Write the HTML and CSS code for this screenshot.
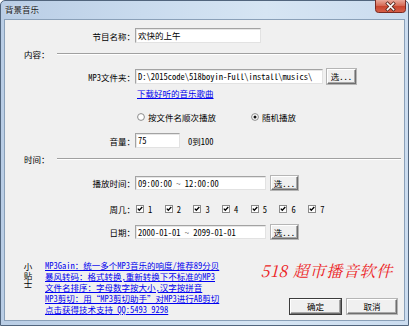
FILE: index.html
```html
<!DOCTYPE html>
<html lang="zh-CN">
<head>
<meta charset="utf-8">
<title>背景音乐</title>
<link rel="stylesheet" href="styles.css">
</head>
<body>
<div class="window">
  <div class="titlebar">
    <span class="title">背景音乐</span>
    <div class="close">
      <svg width="31" height="13" viewBox="0 0 31 13">
        <defs>
          <linearGradient id="cg" x1="0" y1="0" x2="0" y2="1">
            <stop offset="0" stop-color="#e9a99b"/>
            <stop offset="0.45" stop-color="#d66a55"/>
            <stop offset="0.5" stop-color="#c8452e"/>
            <stop offset="1" stop-color="#d7604a"/>
          </linearGradient>
        </defs>
        <path d="M0.5 0 V9.5 Q0.5 12.5 3.5 12.5 H27.5 Q30.5 12.5 30.5 9.5 V0" fill="url(#cg)" stroke="#7a2a22"/>
        <path d="M12.5 3.5 L18.5 9.5 M18.5 3.5 L12.5 9.5" stroke="#5a2a22" stroke-width="3.2" stroke-linecap="square"/>
        <path d="M12.5 3.5 L18.5 9.5 M18.5 3.5 L12.5 9.5" stroke="#ffffff" stroke-width="1.6" stroke-linecap="square"/>
      </svg>
    </div>
  </div>
  <div class="client">
    <div class="row r-name">
      <span class="lbl">节目名称：</span>
      <div class="edit w-name">欢快的上午</div>
    </div>

    <div class="group g-content">
      <span class="glbl">内容：</span>
      <span class="gline"></span>
    </div>

    <div class="row r-mp3">
      <span class="lbl">MP3文件夹：</span>
      <div class="edit w-path">D:\2015code\518boyin-Full\install\musics\</div>
      <button class="btn btn-pick">选...</button>
    </div>

    <div class="r-link">
      <a class="link" href="#">下载好听的音乐歌曲</a>
    </div>

    <div class="r-radio">
      <span class="radio-item ri-1">
        <svg width="8" height="8" viewBox="0 0 8 8"><circle cx="4" cy="4" r="3.4" fill="#fff" stroke="#8a8a8a"/></svg>
        <span>按文件名顺次播放</span>
      </span>
      <span class="radio-item ri-2">
        <svg width="8" height="8" viewBox="0 0 8 8"><circle cx="4" cy="4" r="3.4" fill="#fff" stroke="#8a8a8a"/><circle cx="4" cy="4" r="1.5" fill="#111"/></svg>
        <span>随机播放</span>
      </span>
    </div>

    <div class="row r-vol">
      <span class="lbl">音量：</span>
      <div class="edit w-vol">75</div>
      <span class="vol-hint">0到100</span>
    </div>

    <div class="group g-time">
      <span class="glbl">时间：</span>
      <span class="gline"></span>
    </div>

    <div class="row r-play">
      <span class="lbl">播放时间：</span>
      <div class="edit w-time">09:00:00 ~ 12:00:00</div>
      <button class="btn btn-pick2">选...</button>
    </div>

    <div class="row r-week">
      <span class="lbl">周几：</span>
      <div class="checks">
        <span class="chk"><svg width="8" height="8" viewBox="0 0 8 8"><rect x=".5" y=".5" width="7" height="7" fill="#fff" stroke="#8a8a8a"/><path d="M1.8 3.6 L3.3 5.3 L6.3 2" fill="none" stroke="#000" stroke-width="1.3"/></svg><span>1</span></span>
        <span class="chk"><svg width="8" height="8" viewBox="0 0 8 8"><rect x=".5" y=".5" width="7" height="7" fill="#fff" stroke="#8a8a8a"/><path d="M1.8 3.6 L3.3 5.3 L6.3 2" fill="none" stroke="#000" stroke-width="1.3"/></svg><span>2</span></span>
        <span class="chk"><svg width="8" height="8" viewBox="0 0 8 8"><rect x=".5" y=".5" width="7" height="7" fill="#fff" stroke="#8a8a8a"/><path d="M1.8 3.6 L3.3 5.3 L6.3 2" fill="none" stroke="#000" stroke-width="1.3"/></svg><span>3</span></span>
        <span class="chk"><svg width="8" height="8" viewBox="0 0 8 8"><rect x=".5" y=".5" width="7" height="7" fill="#fff" stroke="#8a8a8a"/><path d="M1.8 3.6 L3.3 5.3 L6.3 2" fill="none" stroke="#000" stroke-width="1.3"/></svg><span>4</span></span>
        <span class="chk"><svg width="8" height="8" viewBox="0 0 8 8"><rect x=".5" y=".5" width="7" height="7" fill="#fff" stroke="#8a8a8a"/><path d="M1.8 3.6 L3.3 5.3 L6.3 2" fill="none" stroke="#000" stroke-width="1.3"/></svg><span>5</span></span>
        <span class="chk"><svg width="8" height="8" viewBox="0 0 8 8"><rect x=".5" y=".5" width="7" height="7" fill="#fff" stroke="#8a8a8a"/><path d="M1.8 3.6 L3.3 5.3 L6.3 2" fill="none" stroke="#000" stroke-width="1.3"/></svg><span>6</span></span>
        <span class="chk"><svg width="8" height="8" viewBox="0 0 8 8"><rect x=".5" y=".5" width="7" height="7" fill="#fff" stroke="#8a8a8a"/><path d="M1.8 3.6 L3.3 5.3 L6.3 2" fill="none" stroke="#000" stroke-width="1.3"/></svg><span>7</span></span>
      </div>
    </div>

    <div class="row r-date">
      <span class="lbl">日期：</span>
      <div class="edit w-time">2000-01-01 ~ 2099-01-01</div>
      <button class="btn btn-pick2">选...</button>
    </div>

    <div class="bottom">
      <div class="tips-label">小贴士</div>
      <div class="tips">
        <a class="link tip" href="#">MP3Gain：统一多个MP3音乐的响度/推荐89分贝</a>
        <a class="link tip" href="#">暴风转码：格式转换,重新转换下不标准的MP3</a>
        <a class="link tip" href="#">文件名排序：字母数字按大小,汉字按拼音</a>
        <a class="link tip" href="#">MP3剪切：用“MP3剪切助手”对MP3进行AB剪切</a>
        <a class="link tip" href="#">点击获得技术支持 QQ:5493 9298</a>
      </div>
      <div class="brand-col">
        <div class="brand">518 超市播音软件</div>
        <div class="buttons">
          <button class="btn btn-main btn-default">确定</button>
          <button class="btn btn-main">取消</button>
        </div>
      </div>
    </div>
  </div>
</div>
</body>
</html>
```
FILE: styles.css
```css
* { box-sizing: border-box; margin: 0; padding: 0; }
html, body { width: 409px; height: 326px; overflow: hidden; background: #fff; }
body {
  font-family: "Noto Sans Mono CJK SC", "Noto Sans CJK SC", sans-serif;
  font-size: 8.5px;
  color: #000;
}

.window {
  width: 409px;
  height: 326px;
  border: 1px solid #51657d;
  border-radius: 5px 5px 0 0;
  background: linear-gradient(to right, #b9cde5 0%, #c9dbee 35%, #d6e5f3 65%, #cbdcef 100%);
  display: flex;
  flex-direction: column;
  padding: 0 3px 4px 3px;
}

.titlebar {
  height: 18px;
  display: flex;
  align-items: flex-start;
  flex: none;
}
.title {
  margin-left: 1px;
  line-height: 16px;
  color: #1a1a1a;
  font-size: 8.5px;
  text-shadow: 0 0 3px #e8f0fa;
}
.close {
  margin-left: auto;
  margin-top: -1px;
  margin-right: -1px;
  width: 31px;
  height: 13px;
  line-height: 0;
}

.client {
  flex: 1;
  border: 1px solid #8aa0b8;
  background: #f0f0f0;
  padding-top: 8px;
  display: flex;
  flex-direction: column;
}

.row { display: flex; align-items: center; flex: none; }
.lbl { width: 130px; text-align: right; flex: none; white-space: nowrap; }

.edit {
  height: 15px;
  background: #fff;
  border: 1px solid;
  border-color: #a3a3a3 #e2e2e2 #e2e2e2 #a3a3a3;
  box-shadow: inset 1px 1px 0 #e6e6e6;
  padding-left: 2px;
  line-height: 13px;
  white-space: nowrap;
  overflow: hidden;
  flex: none;
}
.w-name { width: 126px; }
.w-path { width: 188px; }
.w-vol { width: 45px; }
.w-time { width: 131px; height: 14px; line-height: 12px; }

.btn {
  font: inherit;
  color: #000;
  background: #f0f0f0;
  border: 1px solid;
  border-color: #ffffff #6e6e6e #6e6e6e #ffffff;
  box-shadow: inset -1px -1px 0 #a8a8a8;
  outline: 1px solid #b5b5b5;
  outline-offset: 0;
  flex: none;
  line-height: 11px;
}
.btn-pick { width: 29px; height: 15px; margin-left: 4px; }
.btn-pick2 { width: 27px; height: 14px; margin-left: 5px; }

.group { display: flex; align-items: center; height: 11px; flex: none; padding-left: 19px; }
.glbl { width: 33px; flex: none; }
.gline {
  flex: none;
  width: 344px;
  height: 2px;
  border-top: 1px solid #a0a0a0;
  border-bottom: 1px solid #ffffff;
}
.g-content { margin-top: 5px; }
.r-mp3 { margin-top: 10px; }
.r-link { margin-top: 4px; height: 11px; line-height: 11px; padding-left: 132px; flex: none; }
.link { color: #0000ee; text-decoration: underline; white-space: nowrap; }

.r-radio { margin-top: 12px; height: 11px; display: flex; align-items: center; flex: none; padding-left: 132px; }
.radio-item { display: flex; align-items: center; gap: 3px; }
.radio-item svg { flex: none; }
.ri-1 { width: 114px; }

.r-vol { margin-top: 11px; }
.vol-hint { margin-left: 8px; }

.g-time { margin-top: 5px; }
.r-play { margin-top: 12px; }

.r-week { margin-top: 13px; height: 11px; }
.checks { display: flex; align-items: center; padding-left: 1px; }
.chk { display: flex; align-items: center; gap: 4px; width: 28.7px; flex: none; }
.chk svg { flex: none; }

.r-date { margin-top: 11px; }

.bottom {
  margin-top: 23px;
  display: flex;
  align-items: flex-start;
  flex: 1;
}
.tips-label {
  margin-left: 18px;
  margin-top: 1px;
  writing-mode: vertical-rl;
  width: 9px;
  line-height: 9px;
  flex: none;
}
.tips {
  margin-left: 13px;
  margin-top: -2px;
  display: flex;
  flex-direction: column;
  flex: none;
}
.tip { display: block; line-height: 11px; height: 11px; }

.brand-col {
  margin-left: auto;
  padding-right: 7px;
  display: flex;
  flex-direction: column;
  align-items: flex-end;
  flex: none;
}
.brand {
  margin-right: 4px;
  font-family: "Noto Serif CJK SC", "Liberation Serif", "Noto Sans CJK SC", serif;
  font-style: italic;
  font-size: 16px;
  line-height: 17px;
  letter-spacing: 0.7px;
  color: #ec1f27;
  white-space: nowrap;
}
.buttons { margin-top: 20px; display: flex; gap: 6px; }
.btn-main { width: 50px; height: 15px; }
.btn-default { width: 51px; outline-color: #3c3c3c; }
```
